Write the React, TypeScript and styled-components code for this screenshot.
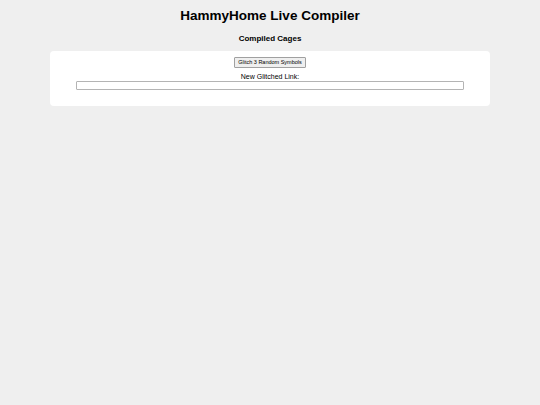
import React from "react";
import styled, { createGlobalStyle } from "styled-components";

const Global = createGlobalStyle`
  html, body { margin: 0; padding: 0; background: #efefef; }
  body { font-family: "Liberation Sans", Arial, sans-serif; color: #000; }
`;

const Page = styled.div`
  display: flex;
  flex-direction: column;
  align-items: center;
  padding-top: 8px;
`;

const Title = styled.h1`
  margin: 0;
  font-size: 13.5px;
  font-weight: bold;
  line-height: 16px;
`;

const Subtitle = styled.h2`
  margin: 10px 0 0;
  font-size: 8px;
  font-weight: bold;
  line-height: 10px;
`;

const Panel = styled.div`
  margin-top: 7px;
  width: 440px;
  box-sizing: border-box;
  background: #fff;
  border-radius: 4px;
  padding: 6px 26px 16px;
  display: flex;
  flex-direction: column;
  align-items: center;
`;

const Button = styled.button`
  font-family: "Liberation Sans", Arial, sans-serif;
  font-size: 5.5px;
  line-height: 7px;
  padding: 1px 3px;
  margin: 0;
  background: #efefef;
  border: 1px solid #a0a0a0;
  border-radius: 1px;
  color: #000;
`;

const Label = styled.div`
  margin-top: 5px;
  font-size: 7px;
  line-height: 8px;
`;

const LinkInput = styled.input`
  box-sizing: border-box;
  width: 388px;
  height: 9px;
  margin: 0;
  padding: 0 2px;
  border: 1px solid #b4b4b4;
  border-radius: 1px;
  background: #fff;
  font-size: 6px;
`;

export default function App() {
  return (
    <>
      <Global />
      <Page>
        <Title>HammyHome Live Compiler</Title>
        <Subtitle>Compiled Cages</Subtitle>
        <Panel>
          <Button>Glitch 3 Random Symbols</Button>
          <Label>New Glitched Link:</Label>
          <LinkInput readOnly value="" />
        </Panel>
      </Page>
    </>
  );
}
